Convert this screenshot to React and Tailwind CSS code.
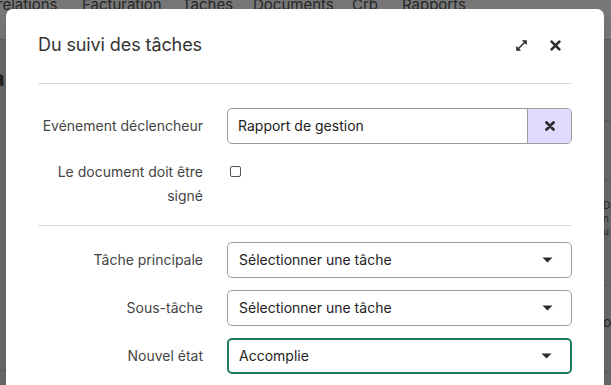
import React from 'react';

const navItems = [
    { label: 'relations', w: 'w-[85px]' },
    { label: 'Facturation', w: 'w-[100px]' },
    { label: 'Tâches', w: 'w-[71px]' },
    { label: 'Documents', w: 'w-[99px]' },
    { label: 'Crb', w: 'w-[50px]' },
    { label: 'Rapports', w: 'w-[100px]' },
];

const Caret = () => (
    <svg width="11" height="6" viewBox="0 0 11 6" className="shrink-0">
        <path d="M0.5 0.5 L10.5 0.5 L5.5 5.5 Z" fill="#2b2b2b" />
    </svg>
);

const BoldX = ({ size = 11, weight = 2.4 }) => (
    <svg width={size} height={size} viewBox="0 0 10 10">
        <path d="M1.5 1.5 L8.5 8.5 M8.5 1.5 L1.5 8.5" stroke="#2b2b2b" strokeWidth={weight} strokeLinecap="round" />
    </svg>
);

const ExpandIcon = () => (
    <svg width="13" height="13" viewBox="0 0 12 12">
        <path d="M3 9 L9 3" stroke="#333" strokeWidth="1.5" />
        <path d="M7 1.5 L10.5 1.5 L10.5 5 Z" fill="#333" stroke="#333" strokeWidth="0.8" strokeLinejoin="round" />
        <path d="M1.5 7 L1.5 10.5 L5 10.5 Z" fill="#333" stroke="#333" strokeWidth="0.8" strokeLinejoin="round" />
    </svg>
);

const Select = ({ value, active }) => (
    <div
        className={
            active
                ? 'h-9 flex items-center justify-between pl-[10px] pr-[18px] rounded-[5px] border-2 border-[#1f7a60] text-[#222]'
                : 'h-9 flex items-center justify-between pl-[10px] pr-[18px] rounded-[5px] border border-[#9c9c9c] text-[#222]'
        }
    >
        <span className={active ? 'text-sm' : 'text-sm ml-px'}>{value}</span>
        <Caret />
    </div>
);

export default function App() {
    return (
        <div className="relative w-[611px] h-[385px] overflow-hidden bg-[#686868] font-['Inter','Liberation_Sans',sans-serif]">
            {/* page behind the overlay */}
            <div className="h-10 bg-[#767676] border-b border-[#5f5f5f] flex items-start -ml-[3px]">
                {navItems.map(item => (
                    <div key={item.label} className={`${item.w} shrink-0 text-[15px] leading-4 -mt-[3px] text-[#262626] whitespace-nowrap`}>
                        {item.label}
                    </div>
                ))}
            </div>
            <div className="pt-[24px] text-[22px] leading-7 font-bold text-[#222] -ml-[8px]">a</div>
            <div className="absolute right-0 top-[120px] w-[10px] border-t border-[#5a5a5a]"></div>
            <div className="absolute right-0 top-[180px] w-[10px] border-t border-[#5a5a5a]"></div>
            <div className="absolute left-[603px] top-[199px] text-[10px] leading-[13px] text-[#262626]">
                <div>Da</div>
                <div>n</div>
                <div>u</div>
            </div>
            <div className="absolute right-0 top-[285px] w-[10px] border-t border-[#5a5a5a]"></div>
            <div className="absolute left-[603px] top-[314px] text-sm leading-4 text-[#262626]">o</div>
            <div className="absolute right-0 top-[371px] w-[10px] border-t border-[#5a5a5a]"></div>
            <div className="absolute left-0 top-[370px] w-[6px] border-t border-[#5a5a5a]"></div>

            {/* modal */}
            <div className="absolute left-[6px] top-[9px] w-[598px] h-[400px] bg-white rounded-[7px] shadow-lg px-8">
                <div className="pt-[22px] pb-6 flex items-center justify-between">
                    <h2 className="text-lg leading-7 text-[#333] tracking-[-0.1px]">Du suivi des tâches</h2>
                    <div className="flex items-center gap-[22px] pr-[11px]">
                        <ExpandIcon />
                        <BoldX size={11} />
                    </div>
                </div>
                <div className="border-t border-[#dadada]"></div>

                <div className="pt-6 grid grid-cols-[165px_1fr] gap-x-6 text-sm">
                    <div className="flex items-center justify-end text-[#444] h-9">Evénement déclencheur</div>
                    <div className="h-9 flex rounded-[5px] border border-[#9c9c9c] overflow-hidden">
                        <div className="flex-1 flex items-center pl-[10px] text-[#222]">Rapport de gestion</div>
                        <div className="w-[44px] border-l border-[#9c9c9c] bg-[#e1dcff] flex items-center justify-center">
                            <BoldX size={10} weight={2.8} />
                        </div>
                    </div>

                    <div className="mt-4 text-right text-[#444] leading-6">
                        Le document doit être
                        <br />
                        signé
                    </div>
                    <div className="mt-4 pt-[6px] pl-[3px]">
                        <div className="w-[11px] h-[11px] border border-[#555] rounded-[2px]"></div>
                    </div>
                </div>

                <div className="mt-[17px] border-t border-[#dadada]"></div>

                <div className="pt-4 grid grid-cols-[165px_1fr] gap-x-6 gap-y-3 text-sm">
                    <div className="flex items-center justify-end text-[#444]">Tâche principale</div>
                    <Select value="Sélectionner une tâche" />
                    <div className="flex items-center justify-end text-[#444]">Sous-tâche</div>
                    <Select value="Sélectionner une tâche" />
                    <div className="flex items-center justify-end text-[#444]">Nouvel état</div>
                    <Select value="Accomplie" active />
                </div>
            </div>
        </div>
    );
}
